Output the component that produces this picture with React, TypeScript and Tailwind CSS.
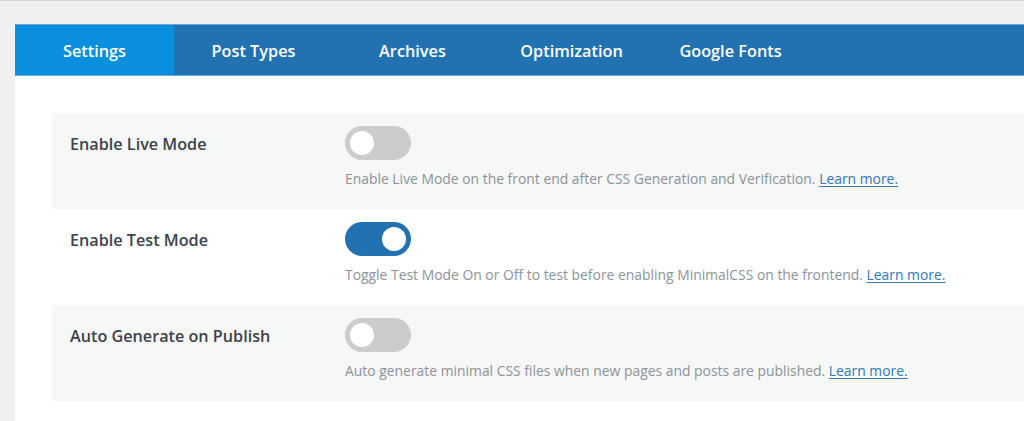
import React from "react";

const tabs = ["Settings", "Post Types", "Archives", "Optimization", "Google Fonts"];

const rows = [
  {
    label: "Enable Live Mode",
    on: false,
    desc: "Enable Live Mode on the front end after CSS Generation and Verification.",
    gray: true,
  },
  {
    label: "Enable Test Mode",
    on: true,
    desc: "Toggle Test Mode On or Off to test before enabling MinimalCSS on the frontend.",
    gray: false,
  },
  {
    label: "Auto Generate on Publish",
    on: false,
    desc: "Auto generate minimal CSS files when new pages and posts are published.",
    gray: true,
  },
];

function Toggle({ on }: { on: boolean }) {
  return (
    <div
      className={
        "w-[66px] h-[34px] rounded-full flex items-center px-[5px] " +
        (on ? "bg-[#2271b1] justify-end" : "bg-[#cccccc] justify-start")
      }
    >
      <div className="w-[24px] h-[24px] rounded-full bg-white" />
    </div>
  );
}

export default function App() {
  return (
    <div
      className="w-[1024px] h-[421px] overflow-hidden bg-[#f0f0f0] border-t border-[#d4d4d4] flex flex-col"
      style={{ fontFamily: '"Open Sans", "Noto Sans", sans-serif' }}
    >
      <div className="h-[23px] shrink-0" />
      <div className="ml-[15px] flex-1 flex flex-col bg-white">
        <div className="flex h-[52px] bg-[#2271b1] border-t border-b border-[#6aa6da] shrink-0">
          {tabs.map((t, i) => (
            <div
              key={t}
              className={
                "w-[159px] flex items-center justify-center pt-[2px] text-white text-[16.3px] font-semibold " +
                (i === 0 ? "bg-[#0a8ede]" : "")
              }
            >
              {t}
            </div>
          ))}
        </div>
        <div className="pt-[37px] pl-[37px] flex flex-col">
          {rows.map((r) => (
            <div
              key={r.label}
              className={"h-[96px] flex pl-[18px] " + (r.gray ? "bg-[#f6f7f7]" : "bg-white")}
            >
              <div className="w-[275px] pt-[19px] text-[16.2px] leading-[24px] font-semibold text-[#3c434a]">
                {r.label}
              </div>
              <div className="pt-[13px] flex flex-col">
                <Toggle on={r.on} />
                <div className="mt-[9px] text-[13.9px] leading-[20px] text-[#8c9399] whitespace-nowrap">
                  {r.desc}{" "}
                  <span className="text-[#3378b8] underline underline-offset-2">Learn more.</span>
                </div>
              </div>
            </div>
          ))}
        </div>
      </div>
    </div>
  );
}
